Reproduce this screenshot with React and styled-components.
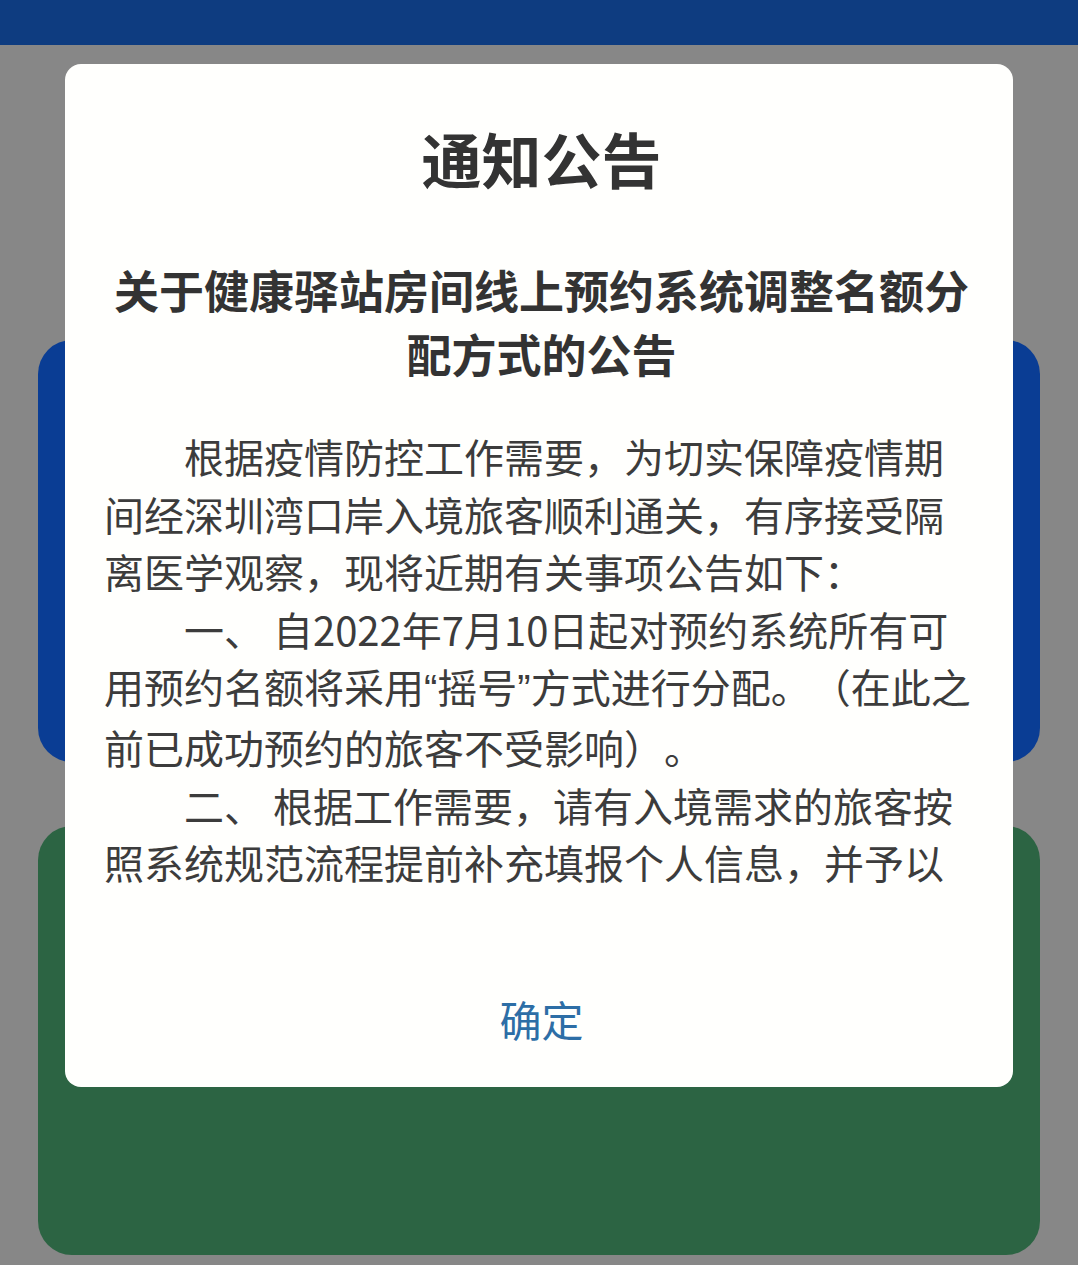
import styled, { createGlobalStyle } from "styled-components";

const GlobalStyle = createGlobalStyle`
  html, body {
    margin: 0;
    padding: 0;
  }
  body {
    font-family: "Noto Sans CJK SC", "Noto Sans", sans-serif;
    background: #878787;
  }
`;

const StyledPage = styled.div`
  position: relative;
  width: 1078px;
  height: 1265px;
  display: flex;
  flex-direction: column;
  background: #878787;
  overflow: hidden;
`;

const StyledHeader = styled.div`
  height: 45px;
  background: #0e3c80;
`;

const StyledCards = styled.div`
  display: flex;
  flex-direction: column;
  gap: 64px;
  padding: 295px 38px 10px 38px;
`;

const StyledCard = styled.div`
  height: ${(p) => p.$height}px;
  border-radius: 34px;
  background: ${(p) => p.$color};
`;

const StyledModal = styled.div`
  position: absolute;
  top: 64px;
  left: 65px;
  width: 948px;
  height: 1023px;
  box-sizing: border-box;
  display: flex;
  flex-direction: column;
  background: #fffffd;
  border-radius: 16px;
  padding: 58px 34px 0 39px;
`;

const StyledTitle = styled.h2`
  margin: 0;
  text-align: center;
  font-size: 60px;
  line-height: 72px;
  font-weight: 700;
  color: #333;
`;

const StyledSubtitle = styled.h3`
  margin: 64px 0 0 0;
  text-align: center;
  font-size: 45px;
  line-height: 64px;
  font-weight: 700;
  color: #333;
`;

const StyledBody = styled.div`
  margin-top: 42px;
  height: 462px;
  overflow-y: auto;
  scrollbar-width: none;
  font-size: 40px;
  line-height: 57.6px;
  color: #3c3c3c;
  text-spacing-trim: space-all;
`;

const StyledPara = styled.p`
  margin: 0;
  text-indent: 2em;
`;

const StyledQuote = styled.span`
  font-family: "Liberation Sans", sans-serif;
`;

const StyledFooter = styled.div`
  margin-top: auto;
  height: 138px;
  display: flex;
  align-items: center;
  justify-content: center;
`;

const StyledButton = styled.button`
  border: none;
  background: none;
  padding: 0;
  font-family: inherit;
  font-size: 42px;
  color: #2d6ea6;
  cursor: pointer;
`;

function App() {
  return (
    <>
      <GlobalStyle />
      <StyledPage>
        <StyledHeader />
        <StyledCards>
          <StyledCard $height={422} $color="#0a3d94" />
          <StyledCard $height={429} $color="#2c6443" />
        </StyledCards>
        <StyledModal>
          <StyledTitle>通知公告</StyledTitle>
          <StyledSubtitle>
            关于健康驿站房间线上预约系统调整名额分配方式的公告
          </StyledSubtitle>
          <StyledBody>
            <StyledPara>
              根据疫情防控工作需要，为切实保障疫情期间经深圳湾口岸入境旅客顺利通关，有序接受隔离医学观察，现将近期有关事项公告如下：
            </StyledPara>
            <StyledPara>
              一、 自2022年7月10日起对预约系统所有可用预约名额将采用
              <StyledQuote>“</StyledQuote>摇号<StyledQuote>”</StyledQuote>
              方式进行分配。（在此之前已成功预约的旅客不受影响）。
            </StyledPara>
            <StyledPara>
              二、 根据工作需要，请有入境需求的旅客按照系统规范流程提前补充填报个人信息，并予以确认。
            </StyledPara>
          </StyledBody>
          <StyledFooter>
            <StyledButton>确定</StyledButton>
          </StyledFooter>
        </StyledModal>
      </StyledPage>
    </>
  );
}

export default App;
